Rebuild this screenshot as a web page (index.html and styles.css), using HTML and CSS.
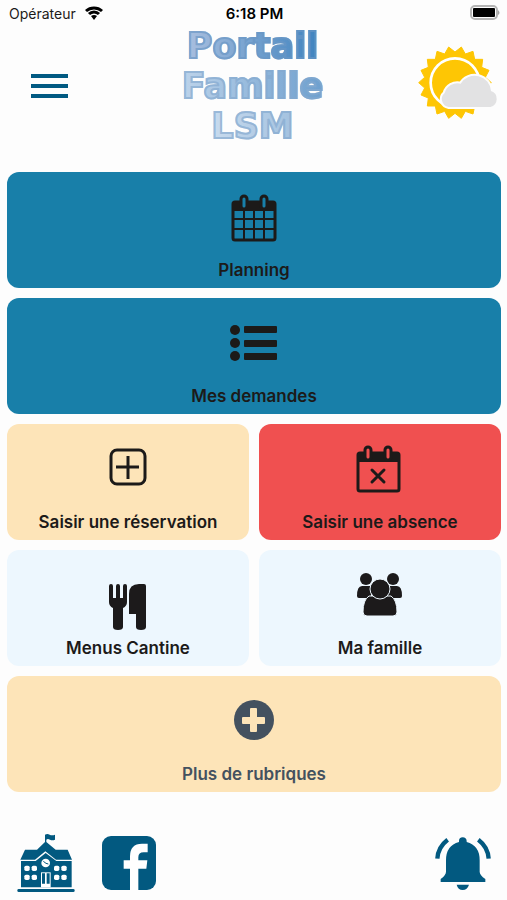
FILE: index.html
```
<!DOCTYPE html>
<html lang="fr">
<head>
    <meta charset="UTF-8">
    <meta name="viewport" content="width=device-width, initial-scale=1.0">
    <title>Portail Famille LSM</title>
    <link rel="stylesheet" href="styles.css">
</head>
<body>
    <div class="status-bar">
        <div class="operator">
            <span>Opérateur</span>
            <svg width="20" height="16" viewBox="0 0 20 16" fill="none" stroke="#000" stroke-width="3">
                <path d="M2 6a12 12 0 0 1 16 0"/>
                <path d="M5 9a7 7 0 0 1 10 0"/>
                <path d="M7 11a5 5 0 0 1 6 0l-3 4z" fill="#000" stroke="none"/>
            </svg>
        </div>
        <span class="time">6:18 PM</span>
        <svg class="battery" width="30" height="16" viewBox="0 0 30 16">
            <rect x="1" y="1" width="26" height="13" rx="4" fill="#fff" stroke="#b5b5b5" stroke-width="2"/>
            <rect x="3" y="3" width="22" height="9" rx="1" fill="#000"/>
            <path d="M28 5q3 3 0 5z" fill="#a5a5a5"/>
        </svg>
    </div>

    <header>
        <button class="menu-btn" aria-label="Menu">
            <svg width="38" height="26" viewBox="0 0 38 26" fill="#015a82">
                <rect x="0" y="1" width="37" height="4"/>
                <rect x="0" y="11" width="37" height="4"/>
                <rect x="0" y="21" width="37" height="4"/>
            </svg>
        </button>
        <h1>
            <span class="word dark">Portail</span>
            <span class="word">Famille</span>
            <span class="word light">LSM</span>
        </h1>
        <svg class="weather" width="82" height="75" viewBox="54 135 246 225">
            <g transform="translate(165 248)" fill="#fec604" stroke="#fec604" stroke-width="3" stroke-linejoin="round">
                <path d="M0-92 19-107 31-86 54-94 59-70 83-70 80-46 102-37 91-16 109 0 91 16 102 37 80 46 83 70 59 70 54 94 31 86 19 107 0 92-19 107-31 86-54 94-59 70-83 70-80 46-102 37-91 16-109 0-91-16-102-37-80-46-83-70-59-70-54-94-31-86-19-107z"/>
                <circle r="73" stroke="#fff" stroke-width="8"/>
            </g>
            <path d="M146 321a24 24 0 0 1-12-42 40 40 0 0 1 48-28 49 49 0 0 1 91 22 25 25 0 0 1-2 48z" fill="none" stroke="#fdfdfd" stroke-width="12"/>
            <path d="M229 320h50v25h-50z" fill="#fdfdfd"/>
            <path d="M146 321a24 24 0 0 1-12-42 40 40 0 0 1 48-28 49 49 0 0 1 91 22 25 25 0 0 1-2 48z" fill="#e2e2e3"/>
        </svg>
    </header>

    <main class="tiles">
        <button class="tile wide blue">
            <svg class="icon" viewBox="0 0 70 70">
                <rect x="14" y="18" width="42" height="38" rx="2" fill="none" stroke="#1c1a19" stroke-width="3"/>
                <path d="M13 18h44v9H13z" fill="#1c1a19"/>
                <path d="M25 26v30M35 26v30M45 26v30M14 35h42M14 45h42" fill="none" stroke="#1c1a19" stroke-width="2"/>
                <rect x="22" y="12" width="6" height="13" rx="3" fill="#187fa9" stroke="#1c1a19" stroke-width="3"/>
                <rect x="42" y="12" width="6" height="13" rx="3" fill="#187fa9" stroke="#1c1a19" stroke-width="3"/>
            </svg>
            <span>Planning</span>
        </button>
        <button class="tile wide blue">
            <svg class="icon" viewBox="0 0 70 70" fill="#1c1a19">
                <circle cx="16" cy="20" r="5"/>
                <circle cx="16" cy="33" r="5"/>
                <circle cx="16" cy="46" r="5"/>
                <rect x="25" y="16" width="33" height="7" rx="1"/>
                <rect x="25" y="30" width="33" height="7" rx="1"/>
                <rect x="25" y="43" width="33" height="7" rx="1"/>
            </svg>
            <span>Mes demandes</span>
        </button>
        <button class="tile cream">
            <svg class="icon" viewBox="0 0 70 70" fill="none" stroke="#1c1a19" stroke-width="3">
                <rect x="18" y="14" width="34" height="34" rx="6"/>
                <path d="M35 20v23M23 31h23"/>
            </svg>
            <span>Saisir une réservation</span>
        </button>
        <button class="tile red">
            <svg class="icon" viewBox="0 0 70 70">
                <rect x="13" y="17" width="41" height="38" rx="2" fill="none" stroke="#1c1a19" stroke-width="3"/>
                <path d="M12 17h43v9H12z" fill="#1c1a19"/>
                <rect x="20" y="11" width="6" height="13" rx="3" fill="#f05050" stroke="#1c1a19" stroke-width="3"/>
                <rect x="40" y="11" width="6" height="13" rx="3" fill="#f05050" stroke="#1c1a19" stroke-width="3"/>
                <path d="M27 34l12 12M39 34l-12 12" stroke="#1c1a19" stroke-width="3" stroke-linecap="round"/>
            </svg>
            <span>Saisir une absence</span>
        </button>
        <button class="tile pale">
            <svg class="icon" viewBox="0 0 70 70" fill="#1c1a1b">
                <path d="M16 24q0-2 2-2t2 2v12h3V24q0-2 2-2t2 2v12h3V24q0-2 2-2t2 2v16q0 4-4 6v19q0 3-5 3t-5-3V46q-4-2-4-6z"/>
                <path d="M36 52V32q0-10 10-10h5q2 0 2 2v41q0 3-5 3t-5-3V52z"/>
            </svg>
            <span>Menus Cantine</span>
        </button>
        <button class="tile pale">
            <svg class="icon" viewBox="0 0 70 70" fill="#1c1a1b">
                <circle cx="21" cy="17" r="6"/>
                <circle cx="48" cy="17" r="6"/>
                <path d="M12 34q0-10 5-10h9v12H14q-2 0-2-2zM57 34q0-10-5-10h-9v12h12q2 0 2-2z"/>
                <path d="M18 50q0-12 6-16h22q6 4 6 16 0 4-4 4H22q-4 0-4-4z" stroke="#edf7fe"/>
                <circle cx="35" cy="27" r="10" stroke="#edf7fe"/>
            </svg>
            <span>Ma famille</span>
        </button>
        <button class="tile wide cream muted">
            <svg class="icon" viewBox="0 0 70 70">
                <circle cx="35" cy="32" r="20" fill="#44515f"/>
                <rect x="31" y="20" width="7" height="24" rx="1" fill="#fde4b8"/>
                <rect x="23" y="29" width="23" height="7" rx="1" fill="#fde4b8"/>
            </svg>
            <span>Plus de rubriques</span>
        </button>
    </main>

    <footer>
        <a href="#" aria-label="École">
            <svg width="58" height="60" viewBox="50 42 174 180" fill="#025980">
                <path d="M134 44q7-4 14 0t16 0v15q-8 4-15 0t-11 0v7l28 23h36l13 30h-48l-32-25-31 25H60l14-30h36l24-23z"/>
                <path d="M62 123h44l30-24 32 24h46v79H62z"/>
                <rect x="51" y="207" width="172" height="9" rx="4"/>
                <circle cx="136" cy="129" r="13" fill="#fff"/>
                <path d="M129 124l8 6 7 2" fill="none" stroke="#025980" stroke-width="3"/>
                <path d="M122 157h29v45h-29z" fill="#fff"/>
                <path d="M125 160h9v31h-9zM139 160h9v31h-9z"/>
                <g fill="#fff">
                    <rect x="72" y="137" width="16" height="16" rx="5"/>
                    <rect x="94" y="137" width="16" height="16" rx="5"/>
                    <rect x="72" y="164" width="16" height="16" rx="5"/>
                    <rect x="94" y="164" width="16" height="16" rx="5"/>
                    <rect x="161" y="137" width="16" height="16" rx="5"/>
                    <rect x="183" y="137" width="16" height="16" rx="5"/>
                    <rect x="161" y="164" width="16" height="16" rx="5"/>
                    <rect x="183" y="164" width="16" height="16" rx="5"/>
                </g>
            </svg>
        </a>
        <a href="#" aria-label="Facebook">
            <svg width="56" height="60" viewBox="301 42 168 180">
                <rect x="304" y="48" width="162" height="162" rx="27" fill="#025980"/>
                <path d="M388 210v-64h-19v-25h19v-12q0-38 36-38h17v26h-12q-16 0-16 15v9h27l-3 25h-24v64z" fill="#fff"/>
            </svg>
        </a>
        <button class="bell-btn" aria-label="Notifications">
            <svg width="58" height="60" viewBox="42 42 174 180" fill="#025980">
                <path d="M117 66v-3q0-11 11-11t12 11v3q39 10 39 55v34q0 10 17 22v9H62v-9q16-12 16-22v-34q0-45 39-55z"/>
                <path d="M110 194h37q-5 16-19 16t-18-16z"/>
                <path d="M52 116q2-35 31-57M206 116q-2-35-31-57" fill="none" stroke="#025980" stroke-width="13"/>
            </svg>
        </button>
    </footer>
</body>
</html>
```
FILE: styles.css
```
:root {
    --bg-color: #fdfdfd;
    --text-color: #1c1a19;
    --blue: #187fa9;
    --cream: #fde4b8;
    --red: #f05050;
    --pale: #edf7fe;
    --muted: #44515f;
}

* {
    box-sizing: border-box;
}

body {
    font-family: 'Inter', 'Liberation Sans', sans-serif;
    margin: 0;
    background-color: var(--bg-color);
    color: var(--text-color);
}

button {
    font: inherit;
    color: inherit;
    border: none;
    background: none;
    padding: 0;
    cursor: pointer;
}

svg {
    display: block;
}

.status-bar {
    display: grid;
    grid-template-columns: 1fr auto 1fr;
    align-items: center;
    height: 26px;
    padding: 0 7px 0 9px;
    font-size: 14px;
}

.operator {
    display: flex;
    align-items: center;
    gap: 8px;
}

.time {
    font-size: 15px;
    font-weight: 600;
    color: #000;
}

.battery {
    justify-self: end;
}

header {
    display: grid;
    grid-template-columns: 1fr auto 1fr;
    align-items: center;
    padding: 0 7px 0 31px;
}

.menu-btn {
    justify-self: start;
    padding: 8px 0;
}

h1 {
    display: flex;
    flex-direction: column;
    align-items: center;
    margin: 0 26px 0 0;
    font-family: 'DejaVu Sans', sans-serif;
    font-size: 35px;
    font-weight: bold;
    line-height: 40px;
}

.word {
    color: transparent;
    background: linear-gradient(to right, #bdd3ea, #6d9fce);
    background-clip: text;
    -webkit-background-clip: text;
    -webkit-text-stroke: 2px #84a9cfaa;
}

.word.dark {
    background-image: linear-gradient(to right, #a9bfdf, #3f83bf);
    -webkit-text-stroke-color: #6a97c5aa;
}

.word.light {
    background-image: linear-gradient(to right, #c8dbee, #a3c1df);
}

.weather {
    align-self: start;
    justify-self: end;
    margin-top: 19px;
}

.tiles {
    display: grid;
    grid-template-columns: 1fr 1fr;
    gap: 10px;
    padding: 26px 6px 0 7px;
}

.tile {
    display: flex;
    flex-direction: column;
    align-items: center;
    gap: 4px;
    height: 116px;
    padding-top: 12px;
    border-radius: 12px;
    font-size: 17px;
    font-weight: 600;
    line-height: 24px;
}

.wide {
    grid-column: span 2;
}

.blue {
    background-color: var(--blue);
}

.cream {
    background-color: var(--cream);
}

.red {
    background-color: var(--red);
}

.pale {
    background-color: var(--pale);
}

.muted {
    color: var(--muted);
}

.icon {
    width: 70px;
    height: 70px;
}

footer {
    display: flex;
    align-items: center;
    gap: 26px;
    padding: 42px 15px 6px 17px;
}

.bell-btn {
    margin-left: auto;
}
```
